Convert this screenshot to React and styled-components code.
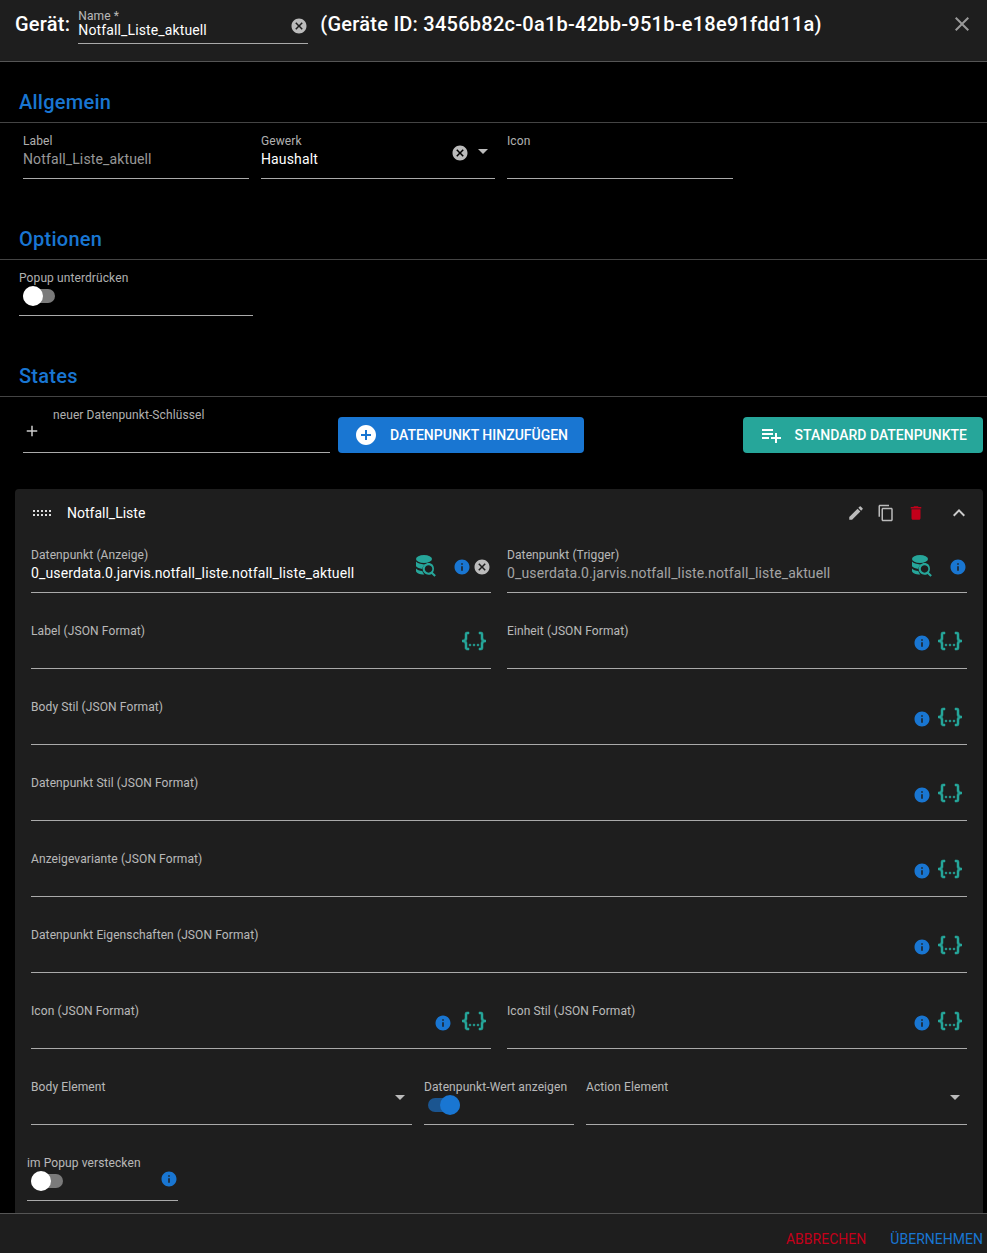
import React from "react";
import styled, { createGlobalStyle } from "styled-components";
import {
  MdAdd,
  MdAddCircle,
  MdArrowDropDown,
  MdCancel,
  MdClose,
  MdContentCopy,
  MdDelete,
  MdEdit,
  MdExpandLess,
  MdInfo,
  MdPlaylistAdd,
} from "react-icons/md";

const BLUE = "#1976d2";
const TEAL = "#26a69a";
const RED = "#c4001a";

const GlobalStyle = createGlobalStyle`
  html, body {
    margin: 0;
    height: 100%;
    background: #000;
  }
  body {
    font-family: Roboto, "Liberation Sans", sans-serif;
    color: #fff;
    overflow: hidden;
  }
`;

const CodeJson = (props) => (
  <svg viewBox="0 0 24 24" width="24" height="24" fill={TEAL} stroke={TEAL} strokeWidth="0.5" {...props}>
    <path d="M5,3H7V5H5V10A2,2 0 0,1 3,12A2,2 0 0,1 5,14V19H7V21H5C3.93,20.73 3,20.1 3,19V15A2,2 0 0,0 1,13H0V11H1A2,2 0 0,0 3,9V5A2,2 0 0,1 5,3M19,3A2,2 0 0,1 21,5V9A2,2 0 0,0 23,11H24V13H23A2,2 0 0,0 21,15V19A2,2 0 0,1 19,21H17V19H19V14A2,2 0 0,1 21,12A2,2 0 0,1 19,10V5H17V3H19M12,15A1,1 0 0,1 13,16A1,1 0 0,1 12,17A1,1 0 0,1 11,16A1,1 0 0,1 12,15M8,15A1,1 0 0,1 9,16A1,1 0 0,1 8,17A1,1 0 0,1 7,16A1,1 0 0,1 8,15M16,15A1,1 0 0,1 17,16A1,1 0 0,1 16,17A1,1 0 0,1 15,16A1,1 0 0,1 16,15Z" />
  </svg>
);

const DatabaseSearch = (props) => (
  <svg viewBox="0 0 24 24" width="24" height="24" fill={TEAL} {...props}>
    <ellipse cx="11" cy="6" rx="8" ry="4" />
    <path d="M3 8.6C4.6 10.4 7.6 11.4 11 11.4c.6 0 1 0 1.5-.1-1.7 1-2.9 2.6-3.2 4.6C6.6 15.6 4.3 14.6 3 13.2Z" />
    <path d="M3 15.4c1.3 1.3 3.5 2.2 6.3 2.5.3 1.300 1 2.500 2 3.500H11c-4.400 0-8-1.600-8-3.500Z" />
    <path d="M19.700 11.800c-2.300-2.300-6-2.300-8.300 0s-2.300 6 0 8.300c1.900 1.900 4.900 2.200 7.100.800l2.900 2.900 1.500-1.500-2.900-2.900c1.500-2.200 1.200-5.300-.300-7.600Zm-1.500 6.800c-1.500 1.500-3.800 1.500-5.300 0s-1.500-3.800 0-5.300 3.800-1.500 5.300 0 1.500 3.800 0 5.300Z" />
  </svg>
);

const Page = styled.div`
  display: flex;
  flex-direction: column;
  height: 100vh;
  overflow: hidden;
`;

const Header = styled.header`
  box-sizing: border-box;
  flex: 0 0 62px;
  display: flex;
  align-items: flex-start;
  background: #1e1e1e;
  border-bottom: 1px solid #555;
  padding: 9px 13px 0 15px;
`;

const HeaderText = styled.span`
  font-size: 20px;
  font-weight: 500;
  line-height: 30px;
  letter-spacing: 0.25px;
  white-space: nowrap;
`;

const NameField = styled.div`
  box-sizing: border-box;
  width: 230px;
  height: 35px;
  margin: 0 12px 0 8px;
  display: flex;
  border-bottom: 1px solid #aaa;
`;

const NameValue = styled.div`
  font-size: 14px;
  line-height: 20px;
  margin-top: -3px;
  letter-spacing: 0.13px;
  white-space: nowrap;
`;

const CloseButton = styled(MdClose)`
  margin-left: auto;
  margin-top: 3px;
  color: #999;
`;

const Scroll = styled.main`
  flex: 1;
  min-height: 0;
  overflow: hidden;
  background: #000;
`;

const SectionTitle = styled.h2`
  margin: ${(p) => (p.$first ? "28px" : "48px")} 0 0;
  padding: 0 0 8px 19px;
  font-size: 20px;
  font-weight: 500;
  line-height: 24px;
  letter-spacing: 0.25px;
  color: ${BLUE};
  border-bottom: 1px solid #444;
`;

const FieldRow = styled.div`
  display: flex;
  gap: 12px;
  margin-top: 11px;
  padding-left: ${(p) => p.$left || "23px"};
`;

const FieldBox = styled.div`
  box-sizing: border-box;
  flex: ${(p) => (p.$width ? `0 0 ${p.$width}px` : "1 1 0")};
  min-width: 0;
  height: 45px;
  display: flex;
  border-bottom: 1px solid #aaa;
`;

const FieldText = styled.div`
  flex: 1;
  min-width: 0;
`;

const Label = styled.div`
  font-size: 12px;
  line-height: 14px;
  letter-spacing: 0.1px;
  color: rgba(255, 255, 255, 0.7);
  white-space: nowrap;
  margin-left: ${(p) => p.$indent || "0"};
  margin-top: ${(p) => p.$top || "0"};
`;

const Value = styled.div`
  font-size: 14px;
  line-height: 20px;
  margin-top: 1px;
  letter-spacing: 0.13px;
  white-space: nowrap;
  color: ${(p) => (p.$muted ? "rgba(255, 255, 255, 0.6)" : "#fff")};
`;

const Adorn = styled.div`
  display: flex;
  align-items: flex-start;
  flex: none;
  gap: ${(p) => p.$gap || "0"};
  padding-right: ${(p) => p.$right || "0"};
`;

const InfoIcon = styled(MdInfo).attrs({ size: 18 })`
  color: ${BLUE};
  margin-top: ${(p) => p.$top || "10px"};
  flex: none;
`;

const ClearIcon = styled(MdCancel).attrs({ size: 18 })`
  color: #bbb;
  margin-top: ${(p) => p.$top || "10px"};
  margin-left: 2px;
  flex: none;
`;

const Arrow = styled(MdArrowDropDown).attrs({ size: 24 })`
  color: #bbb;
  margin-top: 5px;
  flex: none;
`;

const JsonIcon = styled(CodeJson)`
  margin-top: 5px;
  flex: none;
`;

const DbIcon = styled(DatabaseSearch)`
  margin-top: 5px;
  margin-right: 16px;
  flex: none;
`;

const SwitchTrack = styled.div`
  position: relative;
  width: 32px;
  height: 20px;
  margin: 1px 0 0 4px;
  &::before {
    content: "";
    position: absolute;
    left: 0;
    right: 0;
    top: 3px;
    height: 14px;
    border-radius: 7px;
    background: ${(p) => (p.$on ? "#1b5590" : "#7a7a7a")};
  }
`;

const SwitchKnob = styled.span`
  position: absolute;
  top: 0;
  left: ${(p) => (p.$on ? "12px" : "0")};
  width: 20px;
  height: 20px;
  border-radius: 50%;
  background: ${(p) => (p.$on ? BLUE : "#fff")};
`;

const Switch = ({ on }) => (
  <SwitchTrack $on={on}>
    <SwitchKnob $on={on} />
  </SwitchTrack>
);

const AddRow = styled.div`
  display: flex;
  align-items: flex-end;
  margin-top: 10px;
  padding: 0 4px 0 23px;
`;

const AddField = styled.div`
  box-sizing: border-box;
  width: 307px;
  height: 46px;
  margin-right: 8px;
  border-bottom: 1px solid #aaa;
  display: flex;
`;

const AddIcon = styled(MdAdd).attrs({ size: 18 })`
  color: #ccc;
  margin-top: 15px;
  flex: none;
`;

const Button = styled.button`
  height: 36px;
  display: flex;
  align-items: center;
  gap: 12px;
  padding: 0 16px 1px;
  margin-left: ${(p) => (p.$push ? "auto" : "0")};
  border: 0;
  border-radius: 4px;
  background: ${(p) => p.$bg};
  color: #fff;
  font: 500 14px/20px Roboto, "Liberation Sans", sans-serif;
  text-transform: uppercase;
  white-space: nowrap;
`;

const Card = styled.section`
  margin: 36px 4px 0 15px;
  padding: 0 16px 16px;
  background: #1e1e1e;
  border-radius: 4px;
`;

const CardHeader = styled.div`
  height: 48px;
  display: flex;
  align-items: center;
  margin-bottom: 11px;
`;

const Grip = styled.svg`
  margin: 0 14px 0 2px;
  flex: none;
`;

const CardTitle = styled.span`
  font-size: 14px;
  color: #fff;
`;

const CardActions = styled.div`
  margin-left: auto;
  display: flex;
  align-items: center;
  gap: 12px;
  color: #bbb;
`;

const Chevron = styled(MdExpandLess)`
  margin: 0 -4px 0 10px;
  color: #ccc;
`;

const Grid = styled.div`
  display: grid;
  grid-template-columns: ${(p) => p.$columns || "460px 460px"};
  column-gap: ${(p) => p.$gap || "16px"};
  row-gap: 31px;
  margin-top: ${(p) => p.$top || "0"};
`;

const FullRow = styled.div`
  grid-column: 1 / -1;
  display: flex;
`;

const LastRow = styled.div`
  display: flex;
  margin: 31px 0 0 -4px;
`;

const Footer = styled.footer`
  flex: 0 0 40px;
  display: flex;
  align-items: center;
  justify-content: flex-end;
  gap: 24px;
  padding: 10px 4px 0 0;
  box-sizing: border-box;
  background: #1e1e1e;
  border-top: 1px solid #555;
`;

const FooterAction = styled.span`
  font-size: 14px;
  letter-spacing: 0.02px;
  text-transform: uppercase;
  color: ${(p) => p.$color};
`;

// Zeile mit JSON-Feld: Info-Icon optional, Klammer-Icon immer
const JsonField = ({ label, info = true, gap = "7px" }) => (
  <FieldBox>
    <FieldText>
      <Label>{label}</Label>
    </FieldText>
    <Adorn $gap={gap} $right="5px">
      {info && <InfoIcon />}
      <JsonIcon />
    </Adorn>
  </FieldBox>
);

const App = () => {
  return (
    <>
      <GlobalStyle />
      <Page>
        <Header>
          <HeaderText>Gerät:</HeaderText>
          <NameField>
            <FieldText>
              <Label>Name *</Label>
              <NameValue>Notfall_Liste_aktuell</NameValue>
            </FieldText>
            <Adorn>
              <ClearIcon $top="8px" />
            </Adorn>
          </NameField>
          <HeaderText>
            (Geräte ID: 3456b82c-0a1b-42bb-951b-e18e91fdd11a)
          </HeaderText>
          <CloseButton size={24} />
        </Header>

        <Scroll>
          <SectionTitle $first>Allgemein</SectionTitle>
          <FieldRow>
            <FieldBox $width={226}>
              <FieldText>
                <Label>Label</Label>
                <Value $muted>Notfall_Liste_aktuell</Value>
              </FieldText>
            </FieldBox>
            <FieldBox $width={234}>
              <FieldText>
                <Label>Gewerk</Label>
                <Value>Haushalt</Value>
              </FieldText>
              <Adorn $gap="2px">
                <ClearIcon />
                <Arrow />
              </Adorn>
            </FieldBox>
            <FieldBox $width={226}>
              <FieldText>
                <Label>Icon</Label>
              </FieldText>
            </FieldBox>
          </FieldRow>

          <SectionTitle>Optionen</SectionTitle>
          <FieldRow $left="19px">
            <FieldBox $width={234}>
              <FieldText>
                <Label>Popup unterdrücken</Label>
                <Switch />
              </FieldText>
            </FieldBox>
          </FieldRow>

          <SectionTitle>States</SectionTitle>
          <AddRow>
            <AddField>
              <AddIcon />
              <Label $indent="12px" $top="1px">neuer Datenpunkt-Schlüssel</Label>
            </AddField>
            <Button $bg={BLUE}>
              <MdAddCircle size={24} />
              Datenpunkt hinzufügen
            </Button>
            <Button $bg={TEAL} $push>
              <MdPlaylistAdd size={24} />
              Standard Datenpunkte
            </Button>
          </AddRow>

          <Card>
            <CardHeader>
              <Grip width="20" height="6" viewBox="0 0 20 6" fill="#ddd">
                {[0, 4, 8, 12, 16].map((x) => (
                  <React.Fragment key={x}>
                    <rect x={x} y="0" width="2" height="2" />
                    <rect x={x} y="4" width="2" height="2" />
                  </React.Fragment>
                ))}
              </Grip>
              <CardTitle>Notfall_Liste</CardTitle>
              <CardActions>
                <MdEdit size={18} />
                <MdContentCopy size={18} />
                <MdDelete size={18} color={RED} />
                <Chevron size={24} />
              </CardActions>
            </CardHeader>

            <Grid>
              <FieldBox>
                <FieldText>
                  <Label>Datenpunkt (Anzeige)</Label>
                  <Value>0_userdata.0.jarvis.notfall_liste.notfall_liste_aktuell</Value>
                </FieldText>
                <Adorn>
                  <DbIcon />
                  <InfoIcon />
                  <ClearIcon />
                </Adorn>
              </FieldBox>
              <FieldBox>
                <FieldText>
                  <Label>Datenpunkt (Trigger)</Label>
                  <Value $muted>0_userdata.0.jarvis.notfall_liste.notfall_liste_aktuell</Value>
                </FieldText>
                <Adorn>
                  <DbIcon />
                  <InfoIcon />
                </Adorn>
              </FieldBox>
              <JsonField label="Label (JSON Format)" info={false} />
              <JsonField label="Einheit (JSON Format)" />
              {[
                "Body Stil (JSON Format)",
                "Datenpunkt Stil (JSON Format)",
                "Anzeigevariante (JSON Format)",
                "Datenpunkt Eigenschaften (JSON Format)",
              ].map((label) => (
                <FullRow key={label}>
                  <JsonField label={label} />
                </FullRow>
              ))}
              <JsonField label="Icon (JSON Format)" gap="10px" />
              <JsonField label="Icon Stil (JSON Format)" />
            </Grid>

            <Grid $columns="381px 150px 381px" $gap="12px" $top="31px">
              <FieldBox>
                <FieldText>
                  <Label>Body Element</Label>
                </FieldText>
                <Adorn>
                  <Arrow />
                </Adorn>
              </FieldBox>
              <FieldBox>
                <FieldText>
                  <Label>Datenpunkt-Wert anzeigen</Label>
                  <Switch on />
                </FieldText>
              </FieldBox>
              <FieldBox>
                <FieldText>
                  <Label>Action Element</Label>
                </FieldText>
                <Adorn>
                  <Arrow />
                </Adorn>
              </FieldBox>
            </Grid>

            <LastRow>
              <FieldBox $width={151}>
                <FieldText>
                  <Label>im Popup verstecken</Label>
                  <Switch />
                </FieldText>
                <Adorn>
                  <InfoIcon $top="14px" />
                </Adorn>
              </FieldBox>
            </LastRow>
          </Card>
        </Scroll>

        <Footer>
          <FooterAction $color={RED}>Abbrechen</FooterAction>
          <FooterAction $color={BLUE}>Übernehmen</FooterAction>
        </Footer>
      </Page>
    </>
  );
};

export default App;
